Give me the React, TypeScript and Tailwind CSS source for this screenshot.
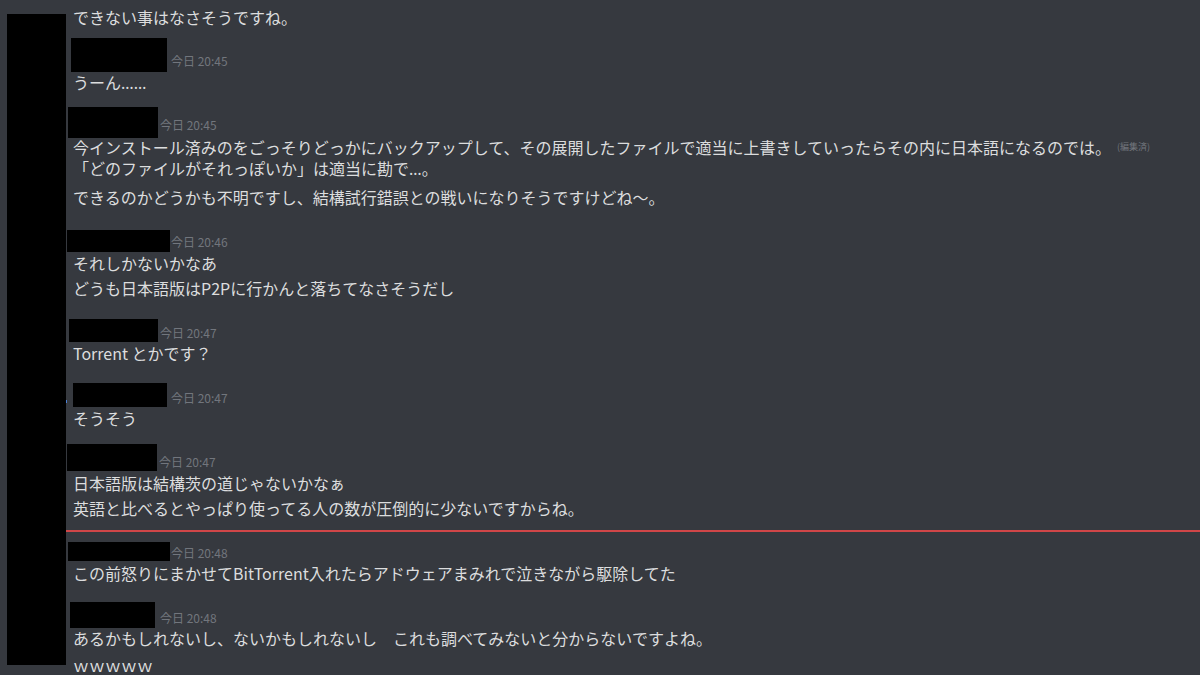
type Header = { box: string; ts: string; time: string; dot?: boolean };

function Head({ box, ts, time, dot }: Header) {
  return (
    <div className="flex items-end">
      {dot && <span className="w-px h-[3px] mb-[4px] bg-[#4a7fd6]" />}
      <div className={box} />
      <span className={ts}>今日 {time}</span>
    </div>
  );
}

const line = "pl-[7px] h-[20px] leading-[20px] whitespace-nowrap";
const dots = { fontFamily: '"Noto Sans", sans-serif' };

export default function App() {
  return (
    <div
      className="w-[1200px] h-[675px] bg-[#36393f] flex overflow-hidden text-[#dcddde] text-[16px]"
      style={{ fontFamily: '"Noto Sans CJK JP", "Noto Sans", sans-serif' }}
    >
      <div className="ml-[7px] mt-[14px] w-[59px] h-[651px] bg-black shrink-0" />
      <div className="flex-1 flex flex-col">
        <div className={`${line} mt-[7px]`}>できない事はなさそうですね。</div>

        <div className="mt-[11px] h-[34px] flex">
          <Head box="ml-[5px] w-[96px] h-[34px] bg-black" ts="ml-[4px] mb-[4px] text-[12px] leading-[14px] text-[#72767d]" time="20:45" />
        </div>
        <div className={line}>
          うーん<span style={dots}>……</span>
        </div>

        <div className="mt-[15px] h-[31px] flex">
          <Head box="ml-[2px] w-[90px] h-[31px] bg-black" ts="ml-[2px] mb-[6px] text-[12px] leading-[14px] text-[#72767d]" time="20:45" />
        </div>
        <div className="pl-[7px] h-[20px] leading-[20px] -mt-px whitespace-nowrap flex items-center">
          今インストール済みのをごっそりどっかにバックアップして、その展開したファイルで適当に上書きしていったらその内に日本語になるのでは。
          <span className="ml-[6px] text-[9px] text-[#72767d]">(編集済)</span>
        </div>
        <div className={`${line} mt-px`}>
          「どのファイルがそれっぽいか」は適当に勘で<span style={dots}>…</span>。
        </div>
        <div className={`${line} mt-[9px]`}>できるのかどうかも不明ですし、結構試行錯誤との戦いになりそうですけどね～。</div>

        <div className="mt-[23px] h-[22px] flex">
          <Head box="ml-[1px] w-[103px] h-[22px] bg-black" ts="ml-[1px] mb-[3px] text-[12px] leading-[14px] text-[#72767d]" time="20:46" />
        </div>
        <div className={`${line} mt-[1px]`}>それしかないかなあ</div>
        <div className={`${line} mt-[5px]`}>どうも日本語版はP2Pに行かんと落ちてなさそうだし</div>

        <div className="mt-[21px] h-[23px] flex">
          <Head box="ml-[3px] w-[89px] h-[23px] bg-black" ts="ml-[2px] mb-[2px] text-[12px] leading-[14px] text-[#72767d]" time="20:47" />
        </div>
        <div className={`${line} mt-[1px]`}>Torrent とかです？</div>

        <div className="mt-[20px] h-[24px] flex">
          <Head dot box="ml-[6px] w-[94px] h-[24px] bg-black" ts="ml-[4px] mb-[2px] text-[12px] leading-[14px] text-[#72767d]" time="20:47" />
        </div>
        <div className={`${line} mt-[1px]`}>そうそう</div>

        <div className="mt-[16px] h-[27px] flex">
          <Head box="ml-[1px] w-[90px] h-[27px] bg-black" ts="ml-[2px] mb-[2px] text-[12px] leading-[14px] text-[#72767d]" time="20:47" />
        </div>
        <div className={`${line} mt-[2px]`}>日本語版は結構茨の道じゃないかなぁ</div>
        <div className={`${line} mt-[5px]`}>英語と比べるとやっぱり使ってる人の数が圧倒的に少ないですからね。</div>

        <div className="mt-[12px] h-[2px] bg-[#d04648]" />

        <div className="mt-[10px] h-[19px] flex">
          <Head box="ml-[2px] w-[102px] h-[19px] bg-black" ts="ml-[1px] mb-[1px] text-[12px] leading-[14px] text-[#72767d]" time="20:48" />
        </div>
        <div className={`${line} mt-[2px]`}>この前怒りにまかせてBitTorrent入れたらアドウェアまみれで泣きながら駆除してた</div>

        <div className="mt-[19px] h-[26px] flex">
          <Head box="ml-[4px] w-[85px] h-[26px] bg-black" ts="ml-[5px] mb-[3px] text-[12px] leading-[14px] text-[#72767d]" time="20:48" />
        </div>
        <div className={line}>あるかもしれないし、ないかもしれないし　これも調べてみないと分からないですよね。</div>
        <div className="pl-[7px] h-[18px] leading-[18px] mt-[8px] whitespace-nowrap">ｗｗｗｗｗ</div>
      </div>
    </div>
  );
}
